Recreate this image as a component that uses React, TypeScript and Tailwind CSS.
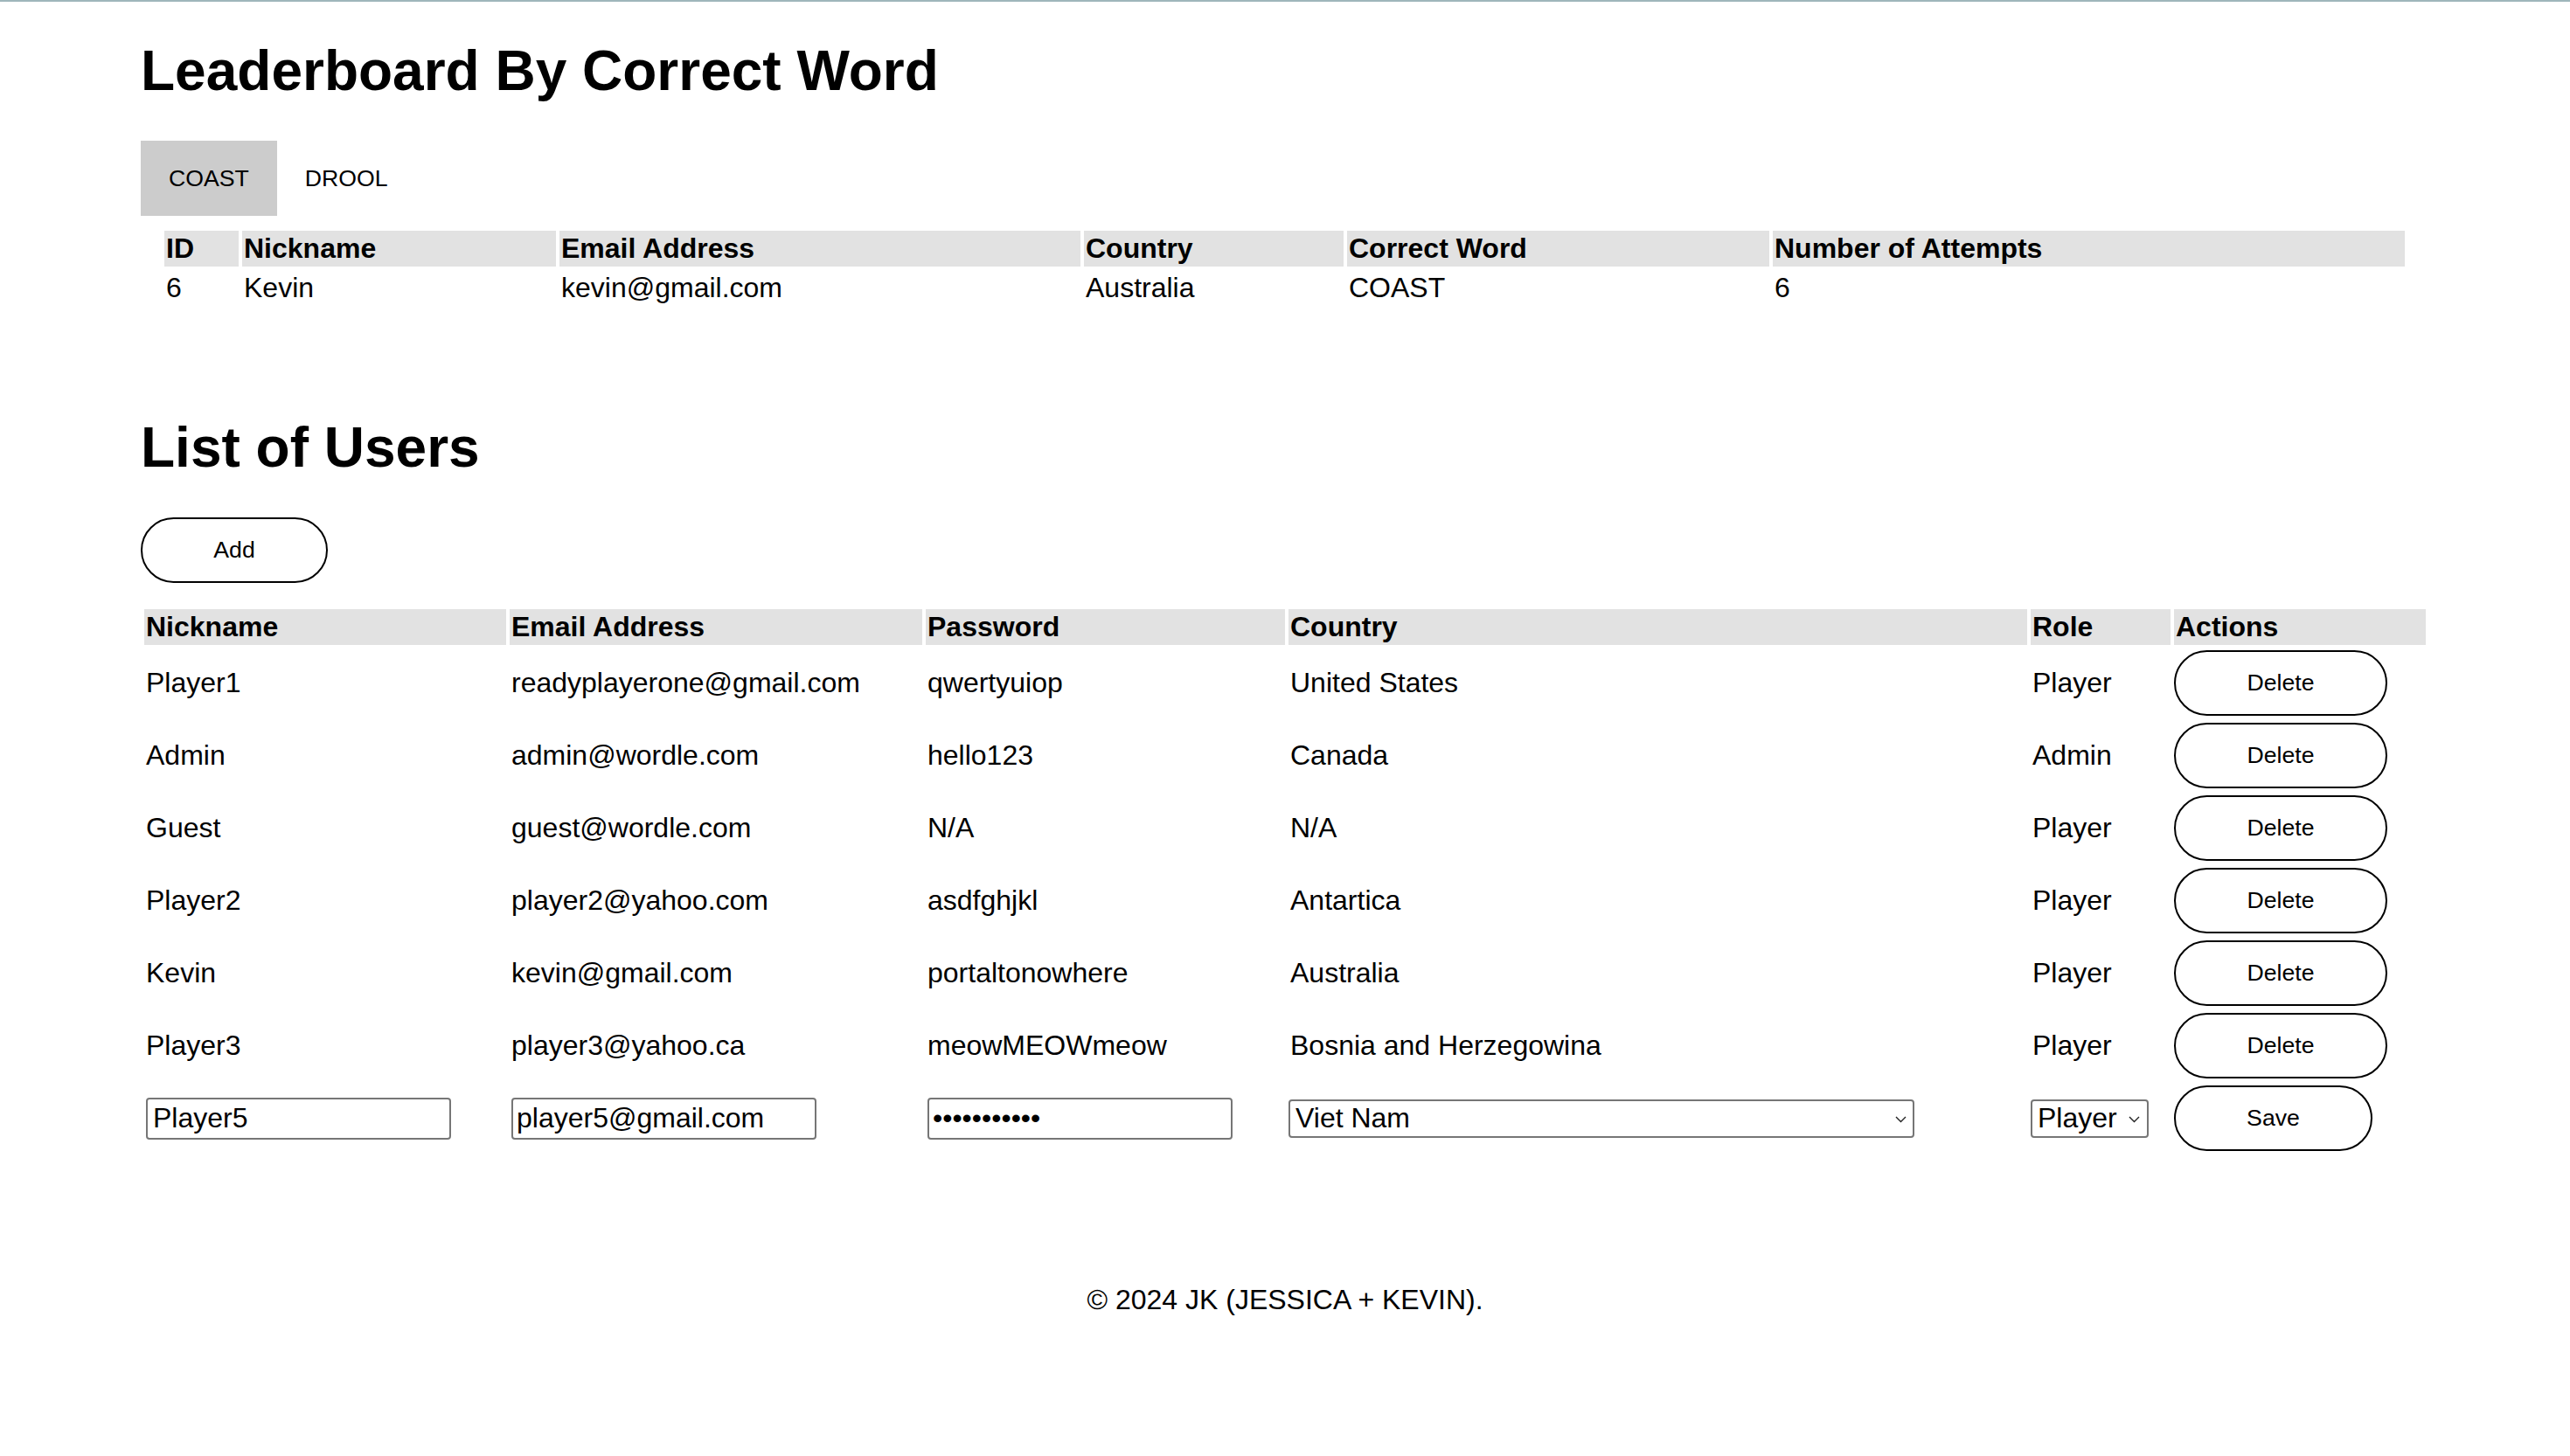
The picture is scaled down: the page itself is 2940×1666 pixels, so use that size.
import React from "react";

type LeaderRow = {
  id: number;
  nickname: string;
  email: string;
  country: string;
  word: string;
  attempts: number;
};

type User = {
  nickname: string;
  email: string;
  password: string;
  country: string;
  role: string;
};

const leaderboard: LeaderRow[] = [
  { id: 6, nickname: "Kevin", email: "kevin@gmail.com", country: "Australia", word: "COAST", attempts: 6 },
];

const users: User[] = [
  { nickname: "Player1", email: "readyplayerone@gmail.com", password: "qwertyuiop", country: "United States", role: "Player" },
  { nickname: "Admin", email: "admin@wordle.com", password: "hello123", country: "Canada", role: "Admin" },
  { nickname: "Guest", email: "guest@wordle.com", password: "N/A", country: "N/A", role: "Player" },
  { nickname: "Player2", email: "player2@yahoo.com", password: "asdfghjkl", country: "Antartica", role: "Player" },
  { nickname: "Kevin", email: "kevin@gmail.com", password: "portaltonowhere", country: "Australia", role: "Player" },
  { nickname: "Player3", email: "player3@yahoo.ca", password: "meowMEOWmeow", country: "Bosnia and Herzegowina", role: "Player" },
];

/** Small down chevron drawn over the native select. */
function Chevron({ className }: { className: string }) {
  return (
    <svg
      className={className}
      width="13"
      height="8"
      viewBox="0 0 13 8"
      fill="none"
      stroke="#222"
      strokeWidth="1.4"
    >
      <path d="M1 1l5.5 5.5L12 1" />
    </svg>
  );
}

function PillButton({ label, width }: { label: string; width: string }) {
  return (
    <button
      className={`${width} h-[75px] rounded-full border-2 border-black bg-white text-[26.67px] leading-[31px] text-black`}
    >
      {label}
    </button>
  );
}

const th = "bg-[#e2e2e2] px-[2px] py-[2px] text-left align-middle font-bold leading-[37px]";
const td = "px-[2px] py-[2px] text-left align-middle leading-[37px]";

export default function App() {
  return (
    <div className="min-h-screen bg-white text-[32px] text-black font-['Liberation_Sans',Arial,sans-serif]">
      <div className="h-[2px] bg-[#9fb6bb]" />
      <main className="px-[161px]">
        {/* Leaderboard */}
        <h1 className="mt-[42px] text-[64px] font-bold leading-[74px]">
          Leaderboard By Correct Word
        </h1>

        <div className="mt-[43px] flex">
          <button className="bg-[#cccccc] px-[32px] py-[28px] text-[26.67px] leading-[30px]">
            COAST
          </button>
          <button className="px-[32px] py-[28px] text-[26.67px] leading-[30px]">
            DROOL
          </button>
        </div>

        <table className="ml-[23px] mt-[13px] w-[2571px] table-fixed border-separate border-spacing-[4px]">
          <colgroup>
            <col className="w-[85px]" />
            <col className="w-[359px]" />
            <col className="w-[596px]" />
            <col className="w-[297px]" />
            <col className="w-[483px]" />
            <col className="w-[723px]" />
          </colgroup>
          <thead>
            <tr>
              <th className={th}>ID</th>
              <th className={th}>Nickname</th>
              <th className={th}>Email Address</th>
              <th className={th}>Country</th>
              <th className={th}>Correct Word</th>
              <th className={th}>Number of Attempts</th>
            </tr>
          </thead>
          <tbody>
            {leaderboard.map((r) => (
              <tr key={r.id}>
                <td className={td}>{r.id}</td>
                <td className={td}>{r.nickname}</td>
                <td className={td}>{r.email}</td>
                <td className={td}>{r.country}</td>
                <td className={td}>{r.word}</td>
                <td className={td}>{r.attempts}</td>
              </tr>
            ))}
          </tbody>
        </table>

        {/* Users */}
        <h2 className="mt-[121px] text-[64px] font-bold leading-[74px]">List of Users</h2>

        <div className="mt-[43px]">
          <PillButton label="Add" width="w-[214px]" />
        </div>

        <table className="mt-[26px] w-[2618px] table-fixed border-separate border-spacing-[4px]">
          <colgroup>
            <col className="w-[414px]" />
            <col className="w-[472px]" />
            <col className="w-[411px]" />
            <col className="w-[845px]" />
            <col className="w-[160px]" />
            <col className="w-[288px]" />
          </colgroup>
          <thead>
            <tr>
              <th className={th}>Nickname</th>
              <th className={th}>Email Address</th>
              <th className={th}>Password</th>
              <th className={th}>Country</th>
              <th className={th}>Role</th>
              <th className={th}>Actions</th>
            </tr>
          </thead>
          <tbody>
            {users.map((u) => (
              <tr key={u.nickname}>
                <td className={td}>{u.nickname}</td>
                <td className={td}>{u.email}</td>
                <td className={td}>{u.password}</td>
                <td className={td}>{u.country}</td>
                <td className={td}>{u.role}</td>
                <td className="px-0 py-[2px] align-middle">
                  <PillButton label="Delete" width="w-[244px]" />
                </td>
              </tr>
            ))}
            <tr>
              <td className={td}>
                <input
                  defaultValue="Player5"
                  className="block h-[48px] w-[349px] rounded-[4px] border-2 border-[#767676] px-[6px] text-[32px] leading-[37px] outline-none"
                />
              </td>
              <td className={td}>
                <input
                  defaultValue="player5@gmail.com"
                  className="block h-[48px] w-[349px] rounded-[4px] border-2 border-[#767676] px-[4px] text-[32px] leading-[37px] outline-none"
                />
              </td>
              <td className={td}>
                <input
                  type="password"
                  defaultValue="meowmeowmeo"
                  className="block h-[48px] w-[349px] rounded-[4px] border-2 border-[#767676] px-[4px] text-[32px] leading-[37px] outline-none"
                />
              </td>
              <td className="px-0 py-[2px] align-middle">
                <div className="relative w-[716px]">
                  <select
                    defaultValue="Viet Nam"
                    className="block h-[44px] w-[716px] appearance-none rounded-[4px] border-2 border-[#767676] bg-white px-[6px] text-[32px] leading-[37px] outline-none"
                  >
                    <option>Viet Nam</option>
                    <option>Australia</option>
                    <option>Canada</option>
                  </select>
                  <Chevron className="pointer-events-none absolute right-[9px] top-[19px]" />
                </div>
              </td>
              <td className="px-0 py-[2px] align-middle">
                <div className="relative w-[135px]">
                  <select
                    defaultValue="Player"
                    className="block h-[44px] w-[135px] appearance-none rounded-[4px] border-2 border-[#767676] bg-white pl-[6px] pr-[24px] text-[32px] leading-[37px] outline-none"
                  >
                    <option>Player</option>
                    <option>Admin</option>
                  </select>
                  <Chevron className="pointer-events-none absolute right-[10px] top-[19px]" />
                </div>
              </td>
              <td className="px-0 py-[2px] align-middle">
                <PillButton label="Save" width="w-[227px]" />
              </td>
            </tr>
          </tbody>
        </table>
      </main>

      <footer className="mt-[146px] pb-[160px] text-center leading-[37px]">
        © 2024 JK (JESSICA + KEVIN).
      </footer>
    </div>
  );
}
